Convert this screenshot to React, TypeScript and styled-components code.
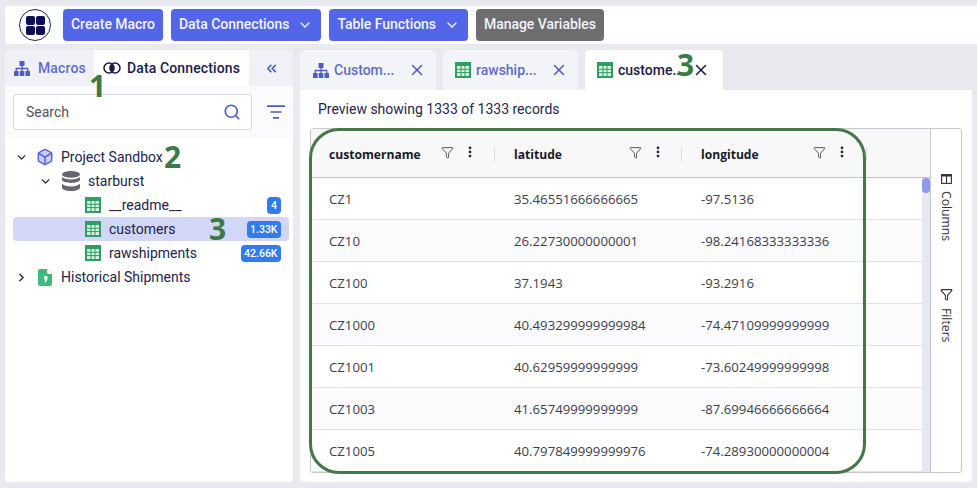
import React from "react";
import styled, { createGlobalStyle } from "styled-components";
import { ChevronDown, ChevronRight, ChevronsLeft, Search, ListFilter, X, Box, Filter, EllipsisVertical } from "lucide-react";

const Global = createGlobalStyle`
  html, body { margin: 0; padding: 0; width: 977px; height: 488px; overflow: hidden; background: #e8eaf0; }
  * { box-sizing: border-box; }
  body { font-family: Roboto, "Liberation Sans", sans-serif; color: #1d1f4f; }
`;

const Page = styled.div`
  position: relative;
  width: 977px;
  height: 488px;
  padding: 6px 5px 6px 5px;
  display: flex;
  flex-direction: column;
  gap: 6px;
`;

const TopBar = styled.header`
  height: 38px;
  margin-right: -5px;
  background: #fff;
  border-radius: 4px 0 0 4px;
  display: flex;
  align-items: center;
  gap: 8px;
  padding: 3px 0 3px 14px;
`;

const LogoWrap = styled.div`
  width: 32px;
  height: 32px;
  margin-right: 4px;
  border-radius: 50%;
  border: 1.5px solid #25254f;
  display: grid;
  grid-template-columns: 9px 9px;
  grid-auto-rows: 9px;
  gap: 1px;
  place-content: center;
`;

const LogoCell = styled.span`
  background: #0e0e58;
  border-radius: 2px;
`;

const ActionButton = styled.button<{ $grey?: boolean }>`
  height: 32px;
  border: 0;
  border-radius: 4px;
  background: ${(p) => (p.$grey ? "#6e6e6e" : "#5366e8")};
  color: #f2f3ff;
  font: 500 14px Roboto, sans-serif;
  letter-spacing: -0.04px;
  padding: 0 8px 2px 8px;
  display: flex;
  align-items: center;
  gap: 8px;
  white-space: nowrap;
`;

const MenuCaret = styled(ChevronDown)`
  margin-top: 2px;
`;

const Body = styled.div`
  flex: 1;
  min-height: 0;
  display: flex;
  gap: 7px;
`;

const Sidebar = styled.aside`
  width: 288px;
  background: #fff;
  border-radius: 4px;
  display: flex;
  flex-direction: column;
  overflow: hidden;
`;

const SideTabs = styled.div`
  height: 36px;
  display: flex;
  background: #f0f1f6;
`;

const SideTab = styled.div<{ $active?: boolean; $w: number }>`
  width: ${(p) => p.$w}px;
  display: flex;
  align-items: center;
  gap: ${(p) => (p.$active ? 6 : 8)}px;
  padding-left: 9px;
  font-size: 14px;
  font-weight: 500;
  letter-spacing: 0.13px;
  color: ${(p) => (p.$active ? "#1b1b4b" : "#5f6cc9")};
  background: ${(p) => (p.$active ? "#fff" : "transparent")};
`;

const CollapseTab = styled.div`
  flex: 1;
  display: flex;
  align-items: center;
  justify-content: center;
  color: #4f5cc4;
`;

const SearchRow = styled.div`
  height: 52px;
  background: #fbfbfd;
  display: flex;
  align-items: flex-start;
  padding: 8px 0 0 8px;
  gap: 14px;
`;

const SearchBox = styled.div`
  width: 239px;
  height: 36px;
  background: #fff;
  border: 1px solid #dadce2;
  border-radius: 3px;
  display: flex;
  align-items: center;
  justify-content: space-between;
  padding: 0 10px 0 12px;
  font-size: 14px;
  color: #50525c;
`;

const SortButton = styled.div`
  height: 36px;
  display: flex;
  align-items: center;
`;

const Tree = styled.div`
  padding: 7px 4px 0 8px;
  display: flex;
  flex-direction: column;
`;

const TreeRow = styled.div<{ $depth: number; $selected?: boolean }>`
  height: 24px;
  display: flex;
  align-items: center;
  padding-left: ${(p) => p.$depth}px;
  padding-right: 8px;
  border-radius: 4px;
  font-size: 14px;
  color: #22234f;
  background: ${(p) => (p.$selected ? "#d2d7f8" : "transparent")};
`;

const Caret = styled.span<{ $after: number }>`
  width: 16px;
  margin-right: ${(p) => p.$after}px;
  display: flex;
  justify-content: center;
  color: #23244f;
`;

const RowLabel = styled.span<{ $gap: number }>`
  margin-left: ${(p) => p.$gap}px;
  flex: 1;
`;

const Badge = styled.span`
  height: 17px;
  min-width: 14px;
  padding: 0 3.5px;
  border-radius: 4px;
  background: #2f7cf2;
  color: #fff;
  font-size: 10.5px;
  font-weight: 500;
  display: flex;
  align-items: center;
  justify-content: center;
`;

const Main = styled.main`
  flex: 1;
  background: #fff;
  border-radius: 4px;
  display: flex;
  flex-direction: column;
  overflow: hidden;
`;

const TabBar = styled.div`
  height: 40px;
  display: flex;
  gap: 7px;
  background: #e8eaf0;
`;

const FileTab = styled.div<{ $active?: boolean; $w: number; $left: number }>`
  width: ${(p) => p.$w}px;
  display: flex;
  align-items: center;
  padding: 0 ${(p) => (p.$active ? 13 : 10)}px 0 ${(p) => p.$left}px;
  gap: 5px;
  border-radius: 4px 4px 0 0;
  font-size: 14px;
  font-weight: 500;
  background: ${(p) => (p.$active ? "#fff" : "#f3f4f8")};
  color: ${(p) => (p.$active ? "#1b1b4b" : "#5f6cc9")};
`;

const TabName = styled.span`
  flex: 1;
  white-space: nowrap;
`;

const Preview = styled.div`
  height: 38px;
  padding: 11px 0 0 18px;
  font-size: 14px;
  color: #24264f;
`;

const GridFrame = styled.div`
  position: relative;
  margin-left: 10px;
  width: 652px;
  height: 345px;
  border: 1px solid #c6c8d0;
  border-radius: 3px;
  display: flex;
  overflow: hidden;
`;

const GridArea = styled.div`
  flex: 1;
  min-width: 0;
  display: flex;
  flex-direction: column;
  font-family: "Open Sans", "Liberation Sans", sans-serif;
`;

const ColumnRow = styled.div`
  display: grid;
  grid-template-columns: 185px 187px 248px;
`;

const HeadRow = styled(ColumnRow)`
  height: 49px;
  background: #f8f8f9;
  border-bottom: 1px solid #bfc1c9;
  flex: none;
`;

const HeadCell = styled.div`
  position: relative;
  display: flex;
  align-items: center;
  padding: 2px 0 0 18px;
  font-size: 12.1px;
  font-weight: 700;
  color: #181a28;
`;

const HeadLabel = styled.span<{ $w: number }>`
  width: ${(p) => p.$w}px;
`;

const HeadIcons = styled.span`
  display: flex;
  align-items: center;
  gap: 9px;
  color: #23243a;
  margin-top: -4px;
`;

const HeadSep = styled.span<{ $at: number }>`
  position: absolute;
  left: ${(p) => p.$at}px;
  top: 18px;
  width: 1px;
  height: 14px;
  background: #dcdde2;
`;

const Rows = styled.div`
  position: relative;
  flex: 1;
  overflow: hidden;
`;

const DataRow = styled(ColumnRow)<{ $odd?: boolean }>`
  height: 42px;
  border-bottom: 1px solid #e2e3e8;
  background: ${(p) => (p.$odd ? "#fbfbfd" : "#fff")};
  align-items: center;
  font-size: 13.2px;
  color: #3c3e4c;
`;

const DataCell = styled.div`
  padding-left: 18px;
  white-space: nowrap;
`;

const ScrollTrack = styled.div`
  position: absolute;
  top: 0;
  right: 0;
  bottom: 0;
  width: 8px;
  background: #e6e8f2;
`;

const ScrollThumb = styled.div`
  height: 15px;
  border-radius: 4px;
  background: #8f97ee;
`;

const SidePanel = styled.div`
  width: 31px;
  border-left: 1px solid #c6c8d0;
  display: flex;
  flex-direction: column;
  align-items: center;
  padding-top: 45px;
  gap: 47px;
`;

const SideItem = styled.div`
  writing-mode: vertical-rl;
  display: flex;
  align-items: center;
  gap: 7px;
  font: 12.2px "Open Sans", "Liberation Sans", sans-serif;
  color: #30323e;
`;

const GreenFrame = styled.div`
  position: absolute;
  left: 309px;
  top: 128px;
  width: 557px;
  height: 346px;
  border: 3px solid #44784a;
  border-radius: 30px;
  pointer-events: none;
`;

const Note = styled.span<{ $x: number; $y: number }>`
  position: absolute;
  left: ${(p) => p.$x}px;
  top: ${(p) => p.$y}px;
  font: 700 30px/30px "Open Sans", "Liberation Sans", sans-serif;
  color: #3b7a45;
  pointer-events: none;
`;

const SheetIcon = () => (
  <svg width="16" height="16" viewBox="0 0 16 16" style={{ flex: "none" }}>
    <rect width="16" height="16" fill="#2f9e62" />
    <rect x="2" y="4" width="12" height="10" fill="#d8f0e0" />
    <path d="M6 4v10M10 4v10M2 7.3h12M2 10.6h12" stroke="#2f9e62" strokeWidth="1" />
  </svg>
);

const NotebookIcon = () => (
  <svg width="14" height="17" viewBox="0 0 14 17" style={{ flex: "none" }}>
    <path d="M2 0h7l5 5v10a2 2 0 0 1-2 2H2a2 2 0 0 1-2-2V2a2 2 0 0 1 2-2z" fill="#3dbb7c" />
    <path d="M9 0v3a2 2 0 0 0 2 2h3z" fill="#fff" />
    <path d="M6 7h3.4v3.2L8 13.2H6.4l1-3H6z" fill="#fff" />
  </svg>
);

const RingsIcon = () => (
  <svg width="18" height="12" viewBox="0 0 18 12">
    <circle cx="6" cy="6" r="5" fill="none" stroke="#1b1b4b" strokeWidth="1.6" />
    <circle cx="12" cy="6" r="5" fill="none" stroke="#1b1b4b" strokeWidth="1.6" />
    <path d="M9 2.2a5 5 0 0 1 0 7.6a5 5 0 0 1 0-7.6z" fill="#1b1b4b" />
  </svg>
);

const SitemapIcon = () => (
  <svg width="16" height="15" viewBox="0 0 16 15" style={{ flex: "none" }}>
    <g fill="#4f5cc4">
      <rect x="5.5" y="0" width="5" height="5" rx="0.6" />
      <rect x="0" y="10" width="4.6" height="5" rx="0.6" />
      <rect x="5.7" y="10" width="4.6" height="5" rx="0.6" />
      <rect x="11.4" y="10" width="4.6" height="5" rx="0.6" />
    </g>
    <path d="M8 5v5M2.3 10V7.5h11.4V10" fill="none" stroke="#4f5cc4" strokeWidth="1.3" />
  </svg>
);

const DatabaseIcon = () => (
  <svg width="18" height="20" viewBox="0 0 18 20" style={{ flex: "none" }}>
    <g fill="#65676e">
      <ellipse cx="9" cy="3.4" rx="9" ry="3.4" />
      <path d="M0 6v2.6C0 10.5 4 12 9 12s9-1.5 9-3.4V6c-1.4 1.6-5 2.5-9 2.5S1.4 7.6 0 6z" />
      <path d="M0 12.8v3.6C0 18.4 4 20 9 20s9-1.6 9-3.6v-3.6c-1.4 1.6-5 2.6-9 2.6s-7.600-1-9-2.600z" />
    </g>
  </svg>
);

const ColumnsIcon = () => (
  <svg width="11" height="10" viewBox="0 0 11 10" style={{ flex: "none" }}>
    <rect x="0.6" y="0.6" width="9.8" height="8.8" fill="none" stroke="#30323e" strokeWidth="1.1" />
    <path d="M0.6 1.800h9.800" stroke="#30323e" strokeWidth="1.600" />
    <path d="M5.500 2v7" stroke="#30323e" strokeWidth="1.100" />
  </svg>
);

const headers: [string, number, number][] = [
  ["customername", 112, 183],
  ["latitude", 115, 185],
  ["longitude", 112, 183],
];
const rows = [
  ["CZ1", "35.46551666666665", "-97.5136"],
  ["CZ10", "26.22730000000001", "-98.24168333333336"],
  ["CZ100", "37.1943", "-93.2916"],
  ["CZ1000", "40.493299999999984", "-74.47109999999999"],
  ["CZ1001", "40.62959999999999", "-73.60249999999998"],
  ["CZ1003", "41.65749999999999", "-87.69946666666664"],
  ["CZ1005", "40.797849999999976", "-74.28930000000004"],
];

export default function App() {
  return (
    <Page>
      <Global />
      <TopBar>
        <LogoWrap>
          <LogoCell /><LogoCell /><LogoCell /><LogoCell />
        </LogoWrap>
        <ActionButton>Create Macro</ActionButton>
        <ActionButton>Data Connections <MenuCaret size={16} /></ActionButton>
        <ActionButton>Table Functions <MenuCaret size={16} /></ActionButton>
        <ActionButton $grey>Manage Variables</ActionButton>
      </TopBar>
      <Body>
        <Sidebar>
          <SideTabs>
            <SideTab $w={89}><SitemapIcon /> Macros</SideTab>
            <SideTab $active $w={155}><RingsIcon /> Data Connections</SideTab>
            <CollapseTab><ChevronsLeft size={15} strokeWidth={2.6} /></CollapseTab>
          </SideTabs>
          <SearchRow>
            <SearchBox>Search <Search size={18} strokeWidth={2.2} color="#4f5cc4" /></SearchBox>
            <SortButton><ListFilter size={20} color="#4f5cc4" /></SortButton>
          </SearchRow>
          <Tree>
            <TreeRow $depth={0}>
              <Caret $after={7}><ChevronDown size={13} strokeWidth={2.6} /></Caret>
              <Box size={18} color="#5a68e0" fill="#c9cdf7" />
              <RowLabel $gap={7}>Project Sandbox</RowLabel>
            </TreeRow>
            <TreeRow $depth={24}>
              <Caret $after={9}><ChevronDown size={13} strokeWidth={2.6} /></Caret>
              <DatabaseIcon />
              <RowLabel $gap={8}>starburst</RowLabel>
            </TreeRow>
            <TreeRow $depth={72}>
              <SheetIcon /><RowLabel $gap={8}>__readme__</RowLabel><Badge>4</Badge>
            </TreeRow>
            <TreeRow $depth={72} $selected>
              <SheetIcon /><RowLabel $gap={8}>customers</RowLabel><Badge>1.33K</Badge>
            </TreeRow>
            <TreeRow $depth={72}>
              <SheetIcon /><RowLabel $gap={8}>rawshipments</RowLabel><Badge>42.66K</Badge>
            </TreeRow>
            <TreeRow $depth={0}>
              <Caret $after={9}><ChevronRight size={13} strokeWidth={2.6} /></Caret>
              <NotebookIcon />
              <RowLabel $gap={9}>Historical Shipments</RowLabel>
            </TreeRow>
          </Tree>
        </Sidebar>
        <Main>
          <TabBar>
            <FileTab $w={136} $left={13}><SitemapIcon /><TabName>Custom...</TabName><X size={18} color="#4f5cc4" /></FileTab>
            <FileTab $w={135} $left={12}><SheetIcon /><TabName>rawship...</TabName><X size={18} color="#4f5cc4" /></FileTab>
            <FileTab $active $w={138} $left={12}><SheetIcon /><TabName>custome..</TabName><X size={18} color="#1b1b4b" /></FileTab>
          </TabBar>
          <Preview>Preview showing 1333 of 1333 records</Preview>
          <GridFrame>
            <GridArea>
              <HeadRow>
                {headers.map(([h, w, at]) => (
                  <HeadCell key={h}>
                    <HeadLabel $w={w}>{h}</HeadLabel>
                    <HeadIcons>
                      <Filter size={13} strokeWidth={1.4} />
                      <EllipsisVertical size={14} strokeWidth={2.8} />
                    </HeadIcons>
                    <HeadSep $at={at} />
                  </HeadCell>
                ))}
              </HeadRow>
              <Rows>
                {rows.map((r, i) => (
                  <DataRow key={r[0]} $odd={i % 2 === 1}>
                    {r.map((c) => <DataCell key={c}>{c}</DataCell>)}
                  </DataRow>
                ))}
                <ScrollTrack><ScrollThumb /></ScrollTrack>
              </Rows>
            </GridArea>
            <SidePanel>
              <SideItem><ColumnsIcon /> Columns</SideItem>
              <SideItem><Filter size={13} /> Filters</SideItem>
            </SidePanel>
          </GridFrame>
        </Main>
      </Body>
      <GreenFrame />
      <Note $x={89} $y={71}>1</Note>
      <Note $x={164} $y={142}>2</Note>
      <Note $x={209} $y={214}>3</Note>
      <Note $x={677} $y={50}>3</Note>
    </Page>
  );
}
